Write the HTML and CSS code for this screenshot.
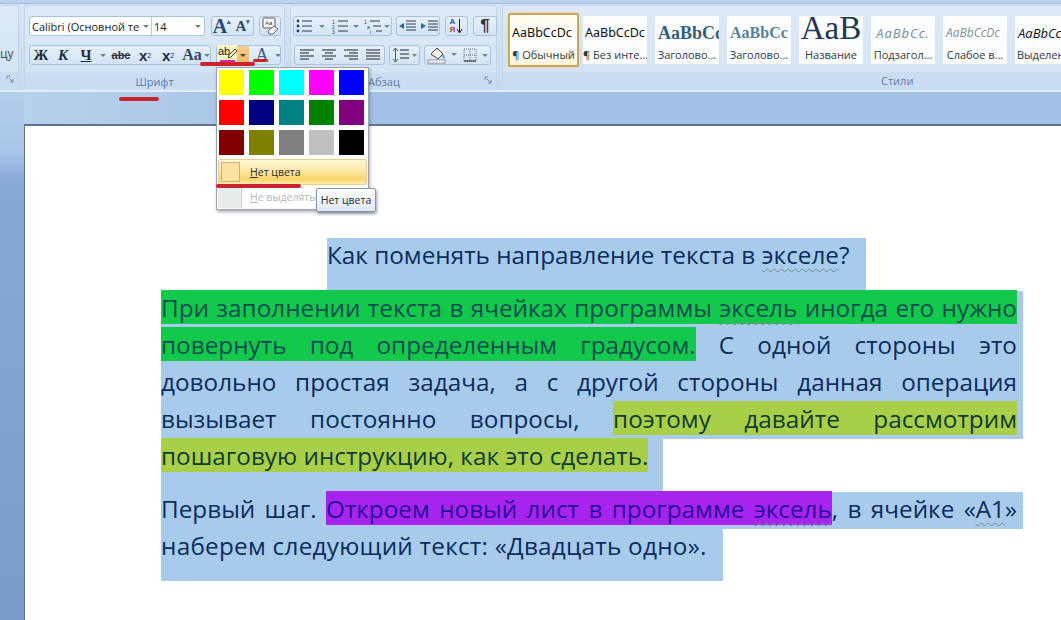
FILE: index.html
```html
<!DOCTYPE html>
<html lang="ru">
<head>
<meta charset="utf-8">
<title>Word</title>
<link rel="stylesheet" href="styles.css">
</head>
<body>
<div class="window">
  <header class="ribbon">
    <section class="grp grp-clip">
      <div class="grp-body"><span class="clip-text">цу</span></div>
      <div class="grp-label"><svg class="launch" width="9" height="9" viewBox="0 0 9 9"><path d="M1 4V1h3M3 3l4 4M7 4v3H4" fill="none" stroke="#6a8cb0"/></svg></div>
    </section>

    <section class="grp grp-font">
      <div class="grp-body">
        <div class="row">
          <div class="bg sel">
            <div class="field f-name"><span class="f-text">Calibri (Основной текст)</span><i class="arr"></i></div>
            <div class="field f-size"><span>14</span><i class="arr"></i></div>
          </div>
          <div class="bg w43">
            <div class="b b21 big">A<sup>▴</sup></div>
            <div class="b b21 small">A<sup>▾</sup></div>
          </div>
          <div class="bg w22">
            <svg width="20" height="18" viewBox="0 0 20 18"><rect x="3" y="1" width="12" height="10" rx="1" fill="#fff" stroke="#555"/><text x="5" y="8" class="tiny">Aa</text><path d="M8 14l6-5 4 3-5 5H9z" fill="#f3f3f3" stroke="#666"/></svg>
          </div>
        </div>
        <div class="row">
          <div class="bg w182">
            <div class="b w22 fmt">Ж</div>
            <div class="b w22 fmt it">К</div>
            <div class="b w24 fmt un">Ч</div>
            <div class="b w10"><i class="arr"></i></div>
            <div class="b w26 strike">abc</div>
            <div class="b w22 fmt2">x<sub>2</sub></div>
            <div class="b w24 fmt2">x<sup>2</sup></div>
            <div class="b w24 case">Aa</div>
            <div class="b w6"><i class="arr"></i></div>
          </div>
          <div class="bg w65">
            <div class="b pen">
              <svg width="20" height="20" viewBox="0 0 20 20"><rect x="0" y="0" width="20" height="15" fill="#fbf5c4"/><text x="1" y="10" class="ab">ab</text><path d="M11 13l1-3 6-6 2 2-6 6z" fill="#f4e6b0" stroke="#333" stroke-width=".9"/><rect x="3" y="15" width="15" height="4" fill="#dc2aa8"/></svg>
            </div>
            <div class="b pen-arr"><i class="arr dark"></i></div>
            <div class="b w26 font-a"><span>A</span></div>
            <div class="b w6"><i class="arr"></i></div>
          </div>
        </div>
      </div>
      <div class="grp-label">Шрифт</div>
    </section>

    <section class="grp grp-para">
      <div class="grp-body">
        <div class="row">
          <div class="bg w99">
            <div class="b w36">
              <svg width="32" height="16" viewBox="0 0 32 16"><g stroke="#2b3a55" fill="none"><path d="M7 3h10M7 8h10M7 13h10"/></g><g fill="#1c3f72"><circle cx="3" cy="3" r="1.4"/><circle cx="3" cy="8" r="1.4"/><circle cx="3" cy="13" r="1.4"/></g><path d="M24 7h6l-3 3z" fill="#788"/></svg>
            </div>
            <div class="b w33">
              <svg width="30" height="16" viewBox="0 0 30 16"><g stroke="#2b3a55" fill="none"><path d="M7 3h10M7 8h10M7 13h10"/></g><text x="1" y="6" class="num">1</text><text x="1" y="11" class="num">2</text><text x="1" y="16" class="num">3</text><path d="M22 7h6l-3 3z" fill="#788"/></svg>
            </div>
            <div class="b w30">
              <svg width="28" height="16" viewBox="0 0 28 16"><g stroke="#2b3a55" fill="none"><path d="M7 3h10M10 8h8M13 13h6"/></g><text x="1" y="6" class="num">1</text><text x="4" y="11" class="num">a</text><text x="7" y="16" class="num">i</text><path d="M21 7h6l-3 3z" fill="#788"/></svg>
            </div>
          </div>
          <div class="bg w44">
            <div class="b w22"><svg width="18" height="14" viewBox="0 0 18 14"><path d="M8 2h10M8 5h10M8 8h10M8 11h10" stroke="#2b3a55"/><path d="M6 4L1 7l5 3z" fill="#2f63a8"/></svg></div>
            <div class="b w22"><svg width="18" height="14" viewBox="0 0 18 14"><path d="M8 2h10M8 5h10M8 8h10M8 11h10" stroke="#2b3a55"/><path d="M1 4l5 3-5 3z" fill="#2f63a8"/></svg></div>
          </div>
          <div class="bg w23 sort"><span class="sort-l"><b>А</b><b class="rd">Я</b></span><svg width="7" height="16" viewBox="0 0 7 16"><path d="M3.500 1v13M1 11l2.500 4L6 11" fill="none" stroke="#222"/></svg></div>
          <div class="bg w24 pil">¶</div>
        </div>
        <div class="row">
          <div class="bg w91">
            <div class="b w22"><svg width="16" height="12" viewBox="0 0 16 12"><path d="M1 1h14M1 4h9M1 7h14M1 10h9" stroke="#222" stroke-width="1.1"/></svg></div>
            <div class="b w22"><svg width="16" height="12" viewBox="0 0 16 12"><path d="M1 1h14M4 4h8M1 7h14M4 10h8" stroke="#222" stroke-width="1.1"/></svg></div>
            <div class="b w22"><svg width="16" height="12" viewBox="0 0 16 12"><path d="M1 1h14M6 4h9M1 7h14M6 10h9" stroke="#222" stroke-width="1.1"/></svg></div>
            <div class="b w22"><svg width="16" height="12" viewBox="0 0 16 12"><path d="M1 1h14M1 4h14M1 7h14M1 10h14" stroke="#222" stroke-width="1.1"/></svg></div>
          </div>
          <div class="bg w31"><svg width="26" height="16" viewBox="0 0 26 16"><path d="M3.500 1v14M1 4l2.500-3L6 4M1 12l2.500 3L6 12" fill="none" stroke="#2f63a8"/><path d="M8 3h9M8 7h9M8 11h9" stroke="#222"/><path d="M20 7h5l-2.500 3z" fill="#788"/></svg></div>
          <div class="bg w67">
            <div class="b w37"><svg width="33" height="18" viewBox="0 0 33 18"><path d="M5 8l6-6 6 6-5 5z" fill="#f4f1ea" stroke="#444"/><path d="M17 8c2 2 2 4 1 5-2-1-2-3-1-5z" fill="#6a8fc4"/><rect x="2" y="14" width="17" height="3" fill="#fff" stroke="#555" stroke-width=".6"/><path d="M25 7h6l-3 3z" fill="#788"/></svg></div>
            <div class="b w30"><svg width="28" height="16" viewBox="0 0 28 16"><rect x="2" y="2" width="12" height="12" fill="none" stroke="#667" stroke-dasharray="1 1"/><path d="M8 2v12M2 8h12" stroke="#667" stroke-dasharray="1 1"/><path d="M2 14h12" stroke="#222"/><path d="M20 7h6l-3 3z" fill="#788"/></svg></div>
          </div>
        </div>
      </div>
      <div class="grp-label para-label">Абзац<svg class="launch" width="9" height="9" viewBox="0 0 9 9"><path d="M1 4V1h3M3 3l4 4M7 4v3H4" fill="none" stroke="#6a8cb0"/></svg></div>
    </section>

    <section class="grp grp-styles">
      <div class="grp-body tiles">
        <div class="tile active"><div class="s s-plain">AaBbCcDc</div><div class="t">¶ Обычный</div></div>
        <div class="tile"><div class="s s-plain">AaBbCcDc</div><div class="t">¶ Без инте...</div></div>
        <div class="tile"><div class="s s-h1">AaBbCc</div><div class="t">Заголово...</div></div>
        <div class="tile"><div class="s s-h2">AaBbCc</div><div class="t">Заголово...</div></div>
        <div class="tile"><div class="s s-title">AaB</div><div class="t">Название</div></div>
        <div class="tile"><div class="s s-sub">AaBbCc.</div><div class="t">Подзагол...</div></div>
        <div class="tile"><div class="s s-em">AaBbCcDc</div><div class="t">Слабое в...</div></div>
        <div class="tile"><div class="s s-str">AaBbCcDc</div><div class="t t-left">Выделение</div></div>
      </div>
      <div class="grp-label styles-label">Стили</div>
    </section>
  </header>

  <main class="workspace">
    <article class="page">
      <div class="line title-line"><span>Как поменять направление текста в <span class="sp">экселе</span>?</span></div>
      <div class="line just"><mark class="green">При заполнении текста в ячейках программы <span class="sp">эксель</span> иногда его нужно</mark></div>
      <div class="line just"><mark class="green">повернуть под определенным градусом.</mark> С одной стороны это</div>
      <div class="line just">довольно простая задача, а с другой стороны данная операция</div>
      <div class="line just">вызывает постоянно вопросы, <mark class="olive">поэтому давайте рассмотрим</mark></div>
      <div class="line last"><mark class="olive">пошаговую инструкцию, как это сделать.</mark></div>
      <div class="line just p2"><span>Первый шаг.</span> <mark class="purple">Откроем новый лист в программе <span class="sp">эксель</span></mark>, в ячейке «<span class="sp">А1</span>»</div>
      <div class="line tail">наберем следующий текст: «Двадцать одно».</div>
    </article>
  </main>

  <div class="mark m1"></div>
  <div class="mark m2"></div>
  <div class="mark m3"></div>

  <div class="popup">
    <div class="swatches">
      <i class="sw c1"></i><i class="sw c2"></i><i class="sw c3"></i><i class="sw c4"></i><i class="sw c5"></i>
      <i class="sw c6"></i><i class="sw c7"></i><i class="sw c8"></i><i class="sw c9"></i><i class="sw c10"></i>
      <i class="sw c11"></i><i class="sw c12"></i><i class="sw c13"></i><i class="sw c14"></i><i class="sw c15"></i>
    </div>
    <div class="opt on"><span class="box"></span><span><u>Н</u>ет цвета</span></div>
    <div class="opt off"><span class="gut"></span><span><u>Н</u>е выделять</span></div>
  </div>
  <div class="mark m4"></div>
  <div class="tooltip">Нет цвета</div>
</div>
</body>
</html>
```
FILE: styles.css
```css
* { box-sizing: border-box; }
html, body { margin: 0; height: 100%; overflow: hidden; }
body { font-family: "Open Sans", "Noto Sans", sans-serif; color: #24405f; }
.window { position: relative; width: 1061px; height: 620px; display: flex; flex-direction: column; overflow: hidden; }

.ribbon { flex: none; height: 92px; display: flex; gap: 5px; padding-top: 5px; background: linear-gradient(#bcd3ee 0, #bcd3ee 3px, #9cb9de 3px, #9cb9de 4px, #d7e5f5 4px, #c5daf1 100%); border-bottom: 2px solid #e2eef7; }
.grp { flex: none; height: 85px; display: flex; flex-direction: column; border: 1px solid #c2d6eb; border-radius: 3px; background: linear-gradient(#dde9f7, #d2e2f4); }
.grp-clip { width: 19px; border-left: 0; }
.grp-font { width: 261px; }
.grp-para { width: 207px; }
.grp-styles { width: 570px; border-right: 0; }
.grp-body { height: 67px; padding-top: 10px; }
.grp-label { height: 17px; position: relative; font-size: 11px; line-height: 17px; text-align: center; color: #5a7ea6; background: #c9dcf1; }
.styles-label { text-align: left; padding-left: 378px; }
.launch { position: absolute; right: 3px; top: 3px; }
.clip-text { display: block; margin-top: 29px; font-size: 12px; text-align: right; padding-right: 5px; color: #334f6e; }

.grp-font .grp-body { padding-left: 4px; }
.grp-para .grp-body { padding-left: 2px; }
.row { display: flex; gap: 5px; height: 20px; margin-bottom: 9px; }
.bg { flex: none; height: 20px; display: flex; align-items: center; justify-content: center; border: 1px solid #a9c3df; border-radius: 3px; background: linear-gradient(#e6f0fb, #d3e3f5); }
.b { flex: none; height: 18px; display: flex; align-items: center; justify-content: center; }
.sel { width: 176px; margin-right: 1px; justify-content: flex-start; background: #fff; }
.field { height: 18px; display: flex; align-items: center; font-size: 11px; color: #222; }
.f-name { width: 122px; padding-left: 2px; border-right: 1px solid #b6cbe3; }
.f-text { width: 107px; overflow: hidden; white-space: nowrap; }
.f-size { width: 52px; padding-left: 2px; justify-content: space-between; padding-right: 3px; }
.arr { display: inline-block; width: 0; height: 0; flex: none; margin-left: 4px; border: 3px solid transparent; border-top: 3px solid #6b7e92; border-bottom: 0; }
.b .arr { margin: 0; }
.arr.dark { border-top-color: #38414c; }

.w6 { width: 6px; } .w10 { width: 10px; }
.w22 { width: 22px; } .w23 { width: 23px; } .w24 { width: 24px; } .w26 { width: 26px; }
.w30 { width: 30px; } .w31 { width: 31px; } .w33 { width: 33px; } .w36 { width: 36px; } .w37 { width: 37px; }
.w43 { width: 43px; } .w44 { width: 44px; } .w65 { width: 65px; } .w67 { width: 67px; }
.w91 { width: 91px; } .w99 { width: 99px; } .w182 { width: 182px; }
.b21 { width: 21px; }

.big, .small, .fmt, .case, .font-a { font-family: "Liberation Serif", serif; font-weight: 700; color: #1f2d3f; }
.big { font-size: 20px; color: #2a4a6c; }
.small { font-size: 15px; color: #2a4a6c; }
.big sup, .small sup { font-size: 7px; line-height: 1; align-self: flex-start; margin-top: 2px; color: #4a5f77; }
.fmt { font-size: 15px; }
.it { font-style: italic; }
.un { text-decoration: underline; }
.strike { font-size: 11px; font-weight: 700; text-decoration: line-through; color: #333; font-family: "Liberation Sans", sans-serif; }
.fmt2 { font-family: "Liberation Sans", sans-serif; font-size: 15px; font-weight: 700; color: #1f2d3f; }
.fmt2 sub, .fmt2 sup { font-size: 7px; font-weight: 400; }
.case { font-size: 16px; color: #33475f; }
.pen { width: 20px; }
.pen-arr { width: 12px; background: linear-gradient(#fbcf8f, #f4b263); }
.font-a { font-size: 18px; color: #3c5a82; font-weight: 400; }
.font-a span { display: block; line-height: 15px; }
.w65 { justify-content: flex-start; }

.tiny { font: 6px "Liberation Sans", sans-serif; fill: #333; }
.ab { font: 11px "Liberation Sans", sans-serif; fill: #222; }
.num { font: 5px "Liberation Sans", sans-serif; fill: #1c3f72; }
.sort { gap: 1px; }
.sort-l { display: flex; flex-direction: column; font: 700 8px/8px "Liberation Sans", sans-serif; color: #2a5a98; }
.rd { color: #a04848; }
.pil { font: 700 17px "Liberation Sans", sans-serif; color: #2c3440; }
.grp-para .row:first-child .bg:first-child { margin-right: -1px; }
.grp-para .row + .row { padding-left: 1px; gap: 4px; }
.para-label { text-align: left; padding-left: 77px; }

.tiles { display: flex; gap: 8px; padding: 10px 0 0 80px; position: relative; }
.tile { flex: none; width: 64px; height: 48px; background: #fbfdff; overflow: hidden; text-align: center; }
.active { position: absolute; left: 5px; top: 7px; width: 71px; height: 54px; padding-top: 1px; background: linear-gradient(#fffdf0, #fff 60%, #fff5d8); border: 2px solid #c9a65a; border-radius: 2px; box-shadow: 0 0 3px #e8d28c; }
.s { height: 31px; line-height: 33px; white-space: nowrap; overflow: hidden; color: #111; }
.t { font-size: 11px; line-height: 15px; white-space: nowrap; overflow: hidden; color: #2e3a46; }
.t-left { text-align: left; padding-left: 2px; }
.s-plain { font: 12.500px/34px "Noto Sans", sans-serif; text-align: left; padding-left: 2px; }
.s-h1 { font: 700 18px/34px "Liberation Serif", serif; color: #365f7e; text-align: left; padding-left: 3px; }
.s-h2 { font: 700 16px/34px "Liberation Serif", serif; color: #5a8098; text-align: left; padding-left: 3px; }
.s-title { font: 33px/24px "Liberation Serif", serif; color: #22384c; }
.s-sub { font: italic 13px/34px "Open Sans", sans-serif; color: #7c8c9c; letter-spacing: 1px; }
.s-em { font: italic 12px/34px "Open Sans", sans-serif; color: #8a8f96; text-align: left; padding-left: 3px; }
.s-str { font: italic 13px/34px "Open Sans", sans-serif; color: #111; text-align: left; padding-left: 3px; }

.workspace { flex: 1; min-height: 0; display: flex; padding: 32px 0 0 24px; background: linear-gradient(#b3cdeb 0, #a8c5e8 60px, #88a9d5 90px, #7a9ccc 100%) left top / 24px 100% no-repeat, linear-gradient(90deg, #b8d1ed, #b0cbea 150px, #a3c1e6 300px); }
.page { flex: 1; padding: 112px 38px 0 136px; background: #fff; border-top: 2px solid #5d7390; border-left: 1px solid #5d7390; font-size: 24.300px; color: #0c2c5c; }
.line { height: 37px; line-height: 34px; background: #a8cbec; }
.just { width: 862px; padding-right: 6px; text-align: justify; text-align-last: justify; white-space: nowrap; }
.title-line { height: 53px; width: 539px; margin-left: 166px; white-space: nowrap; }
.last { width: 502px; height: 53px; white-space: nowrap; }
.tail { width: 562px; height: 52px; white-space: nowrap; letter-spacing: .25px; }
mark { padding: 1px 0 0; }
.green { background: #12c94c; color: #0d4c50; }
.olive { background: #a9cf48; color: #103c34; }
.purple { background: #a723ee; color: #2a0f96; }
.sp { text-decoration: underline wavy #7a8594 1px; text-underline-offset: 4px; }

.mark { position: absolute; height: 3px; border-radius: 2px; background: #c8242e; }
.m1 { left: 119px; top: 97px; width: 40px; height: 4px; }
.m2 { left: 200px; top: 62px; width: 55px; height: 4px; }
.m3 { left: 253px; top: 59px; width: 15px; }
.m4 { left: 216px; top: 184px; width: 85px; height: 4px; z-index: 3; }

.popup { position: absolute; left: 216px; top: 67px; width: 153px; height: 143px; padding: 1px; background: #fff; border: 1px solid #9aa4ae; box-shadow: 1px 2px 3px rgba(60, 70, 90, .45); z-index: 2; }
.swatches { display: grid; grid-template-columns: repeat(5, 25px); grid-auto-rows: 25px; gap: 5px; padding: 1px 0 0 1px; justify-content: start; }
.sw { display: block; }
.c1 { background: #ffff00; } .c2 { background: #00ff00; } .c3 { background: #00ffff; } .c4 { background: #ff00ff; } .c5 { background: #0000ff; }
.c6 { background: #ff0000; } .c7 { background: #000080; } .c8 { background: #008080; } .c9 { background: #008000; } .c10 { background: #800080; }
.c11 { background: #800000; } .c12 { background: #808000; } .c13 { background: #808080; } .c14 { background: #c0c0c0; } .c15 { background: #000000; }
.opt { display: flex; align-items: center; gap: 10px; font-size: 10.500px; }
.on { height: 26px; margin-top: 4px; padding-left: 2px; color: #2a2a2a; background: linear-gradient(#fff7d8, #fde9a8 45%, #fbd468 80%, #ffeeb0); border: 1px solid #e6cf94; border-radius: 2px; }
.box { width: 19px; height: 20px; background: #fbe2a4; border: 1px solid #cdb274; }
.off { height: 23px; color: #b4bac0; }
.gut { width: 24px; height: 23px; background: #e8ecec; border-right: 1px solid #ccd0d2; margin-right: -2px; }
.tooltip { position: absolute; left: 316px; top: 188px; width: 60px; height: 24px; text-align: center; font-size: 10.500px; line-height: 22px; color: #2a2f36; background: linear-gradient(#fff, #dfe6f2); border: 1px solid #8a96a4; border-radius: 2px; box-shadow: 1px 2px 3px rgba(60, 70, 90, .5); z-index: 4; white-space: nowrap; }
```
